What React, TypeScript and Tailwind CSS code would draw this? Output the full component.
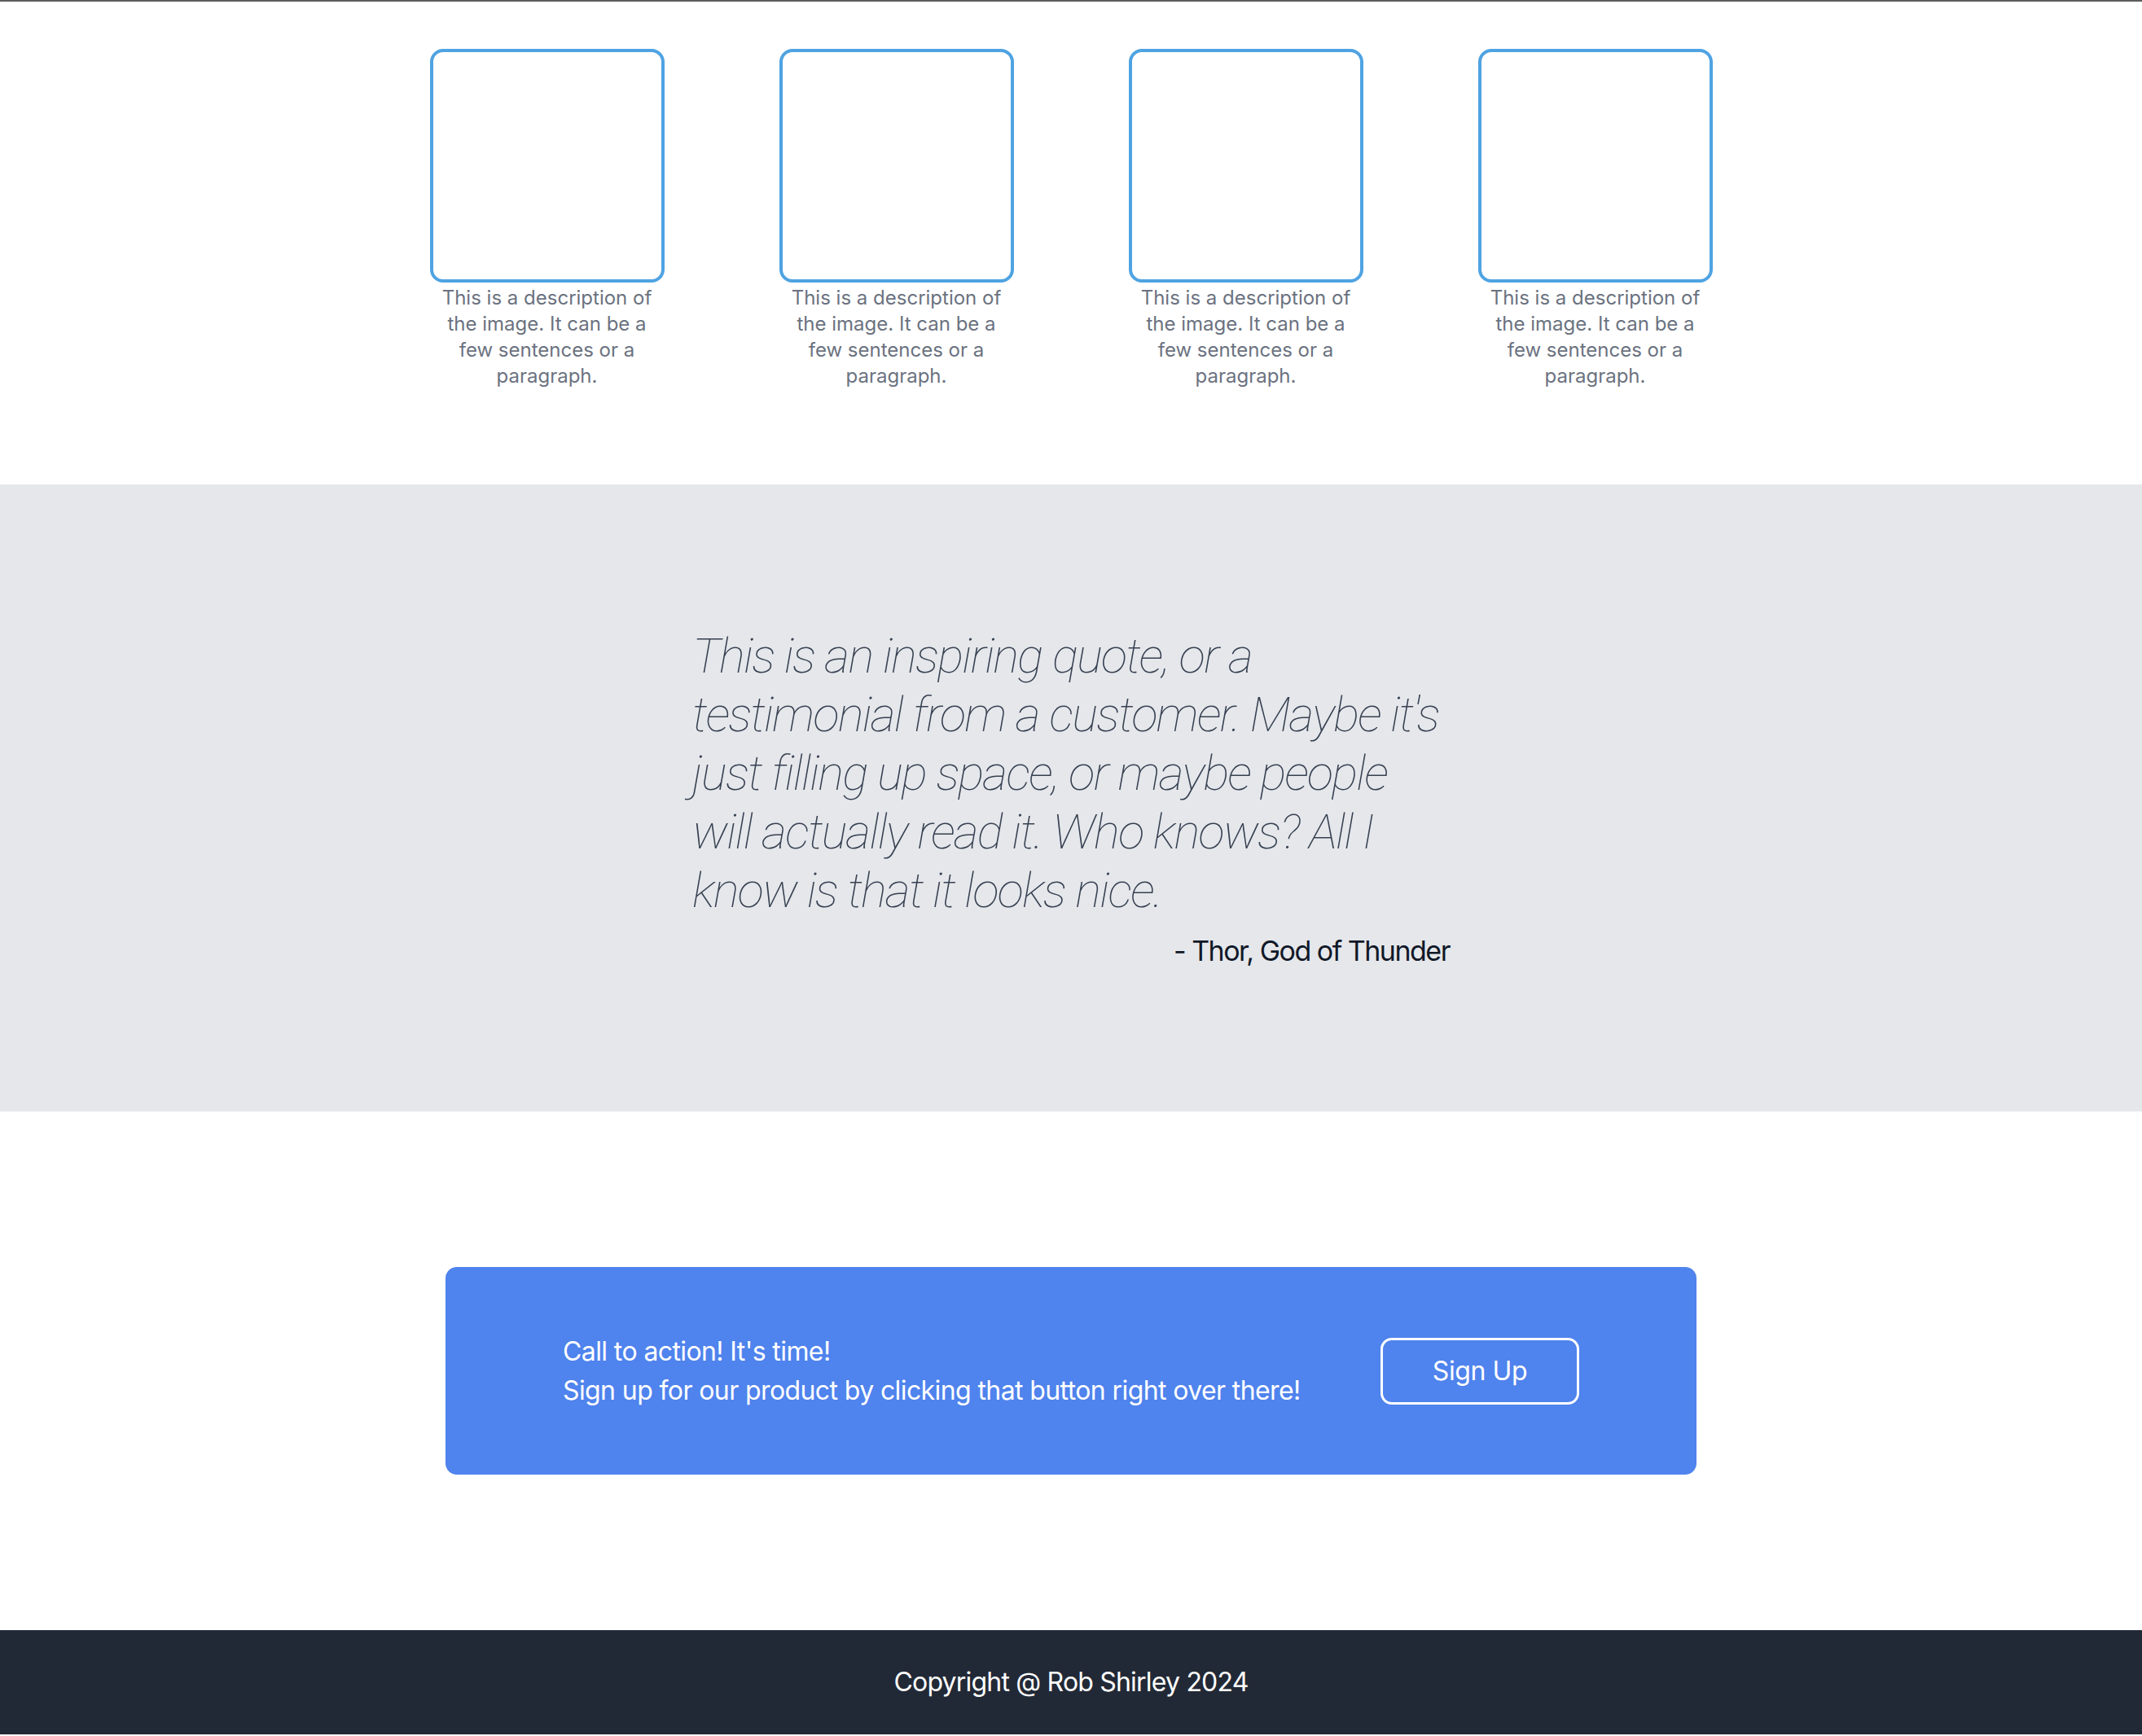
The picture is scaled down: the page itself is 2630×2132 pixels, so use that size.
const cards = [1, 2, 3, 4]

function ImageCard() {
  return (
    <div className="flex flex-col items-center">
      <div className="w-[288px] h-[287px] rounded-[16px] border-[4px] border-[#4fa3e2] bg-white" />
      <p className="w-[288px] mt-[3px] text-center text-[24px] leading-[32px] text-[#6b7280]">
        This is a description of the image. It can be a few sentences or a paragraph.
      </p>
    </div>
  )
}

export default function App() {
  return (
    <div className="min-h-[2132px] bg-white font-['Inter','Helvetica_Neue',sans-serif] border-t-[2px] border-[#5c5c5c]">
      {/* gallery */}
      <section className="pt-[58px] pb-[117px]">
        <div className="mx-auto w-[1716px] grid grid-cols-4">
          {cards.map((c) => (
            <ImageCard key={c} />
          ))}
        </div>
      </section>

      {/* testimonial */}
      <section className="bg-[#e5e7eb] pt-[175px] pb-[169px]">
        <div className="mx-auto w-[930px]">
          <p className="font-['Roboto',sans-serif] text-[60px] leading-[72px] font-thin italic tracking-[-1.8px] text-[#374151]">
            This is an inspiring quote, or a testimonial from a customer. Maybe it's just filling up space, or
            maybe people will actually read it. Who knows? All I know is that it looks nice.
          </p>
          <p className="mt-[10px] text-right text-[34px] leading-[56px] tracking-[-1.5px] text-[#111827]">
            - Thor, God of Thunder
          </p>
        </div>
      </section>

      {/* call to action */}
      <section className="py-[191px]">
        <div className="mx-auto w-[1536px] h-[255px] rounded-[14px] bg-[#4f83ed] px-[144px] flex items-center justify-between">
          <div className="text-white text-[32px] leading-[48px] tracking-[-0.6px]">
            <p>Call to action! It's time!</p>
            <p>Sign up for our product by clicking that button right over there!</p>
          </div>
          <button className="w-[244px] h-[82px] rounded-[14px] border-[3px] border-white text-white text-[32px] leading-[48px] tracking-[-0.4px]">
            Sign Up
          </button>
        </div>
      </section>

      <footer className="bg-[#222936] h-[128px] flex items-center justify-center">
        <p className="text-white text-[32px] leading-[48px] tracking-[-0.8px]">Copyright @ Rob Shirley 2024</p>
      </footer>
    </div>
  )
}
